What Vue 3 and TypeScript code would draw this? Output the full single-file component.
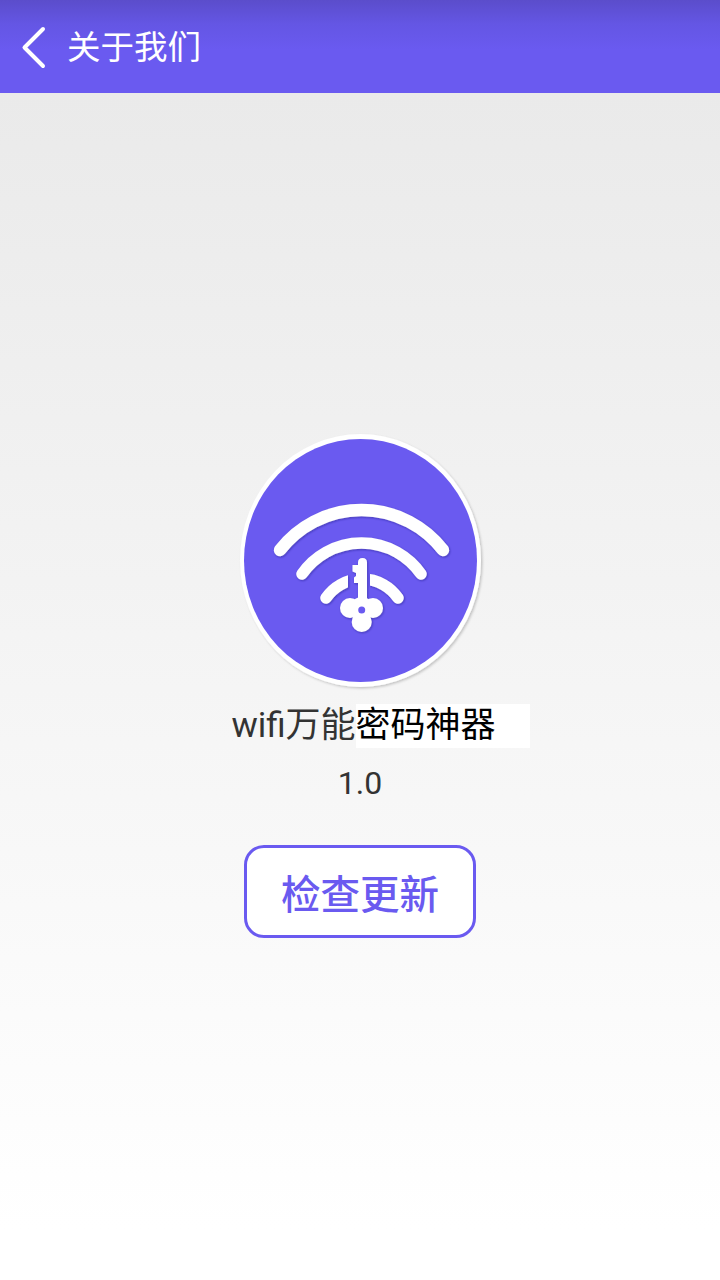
<template>
  <div class="page">
    <header class="topbar">
      <svg class="back" width="30" height="50" viewBox="0 0 30 50" aria-label="返回">
        <path d="M24 7 L5.500 25.500 L24 44" />
      </svg>
      <h1 class="topbar__title">关于我们</h1>
    </header>

    <main class="about">
      <svg class="logo" width="250" height="260" viewBox="0 0 250 260">
        <defs>
          <filter id="ringShadow" x="-10%" y="-10%" width="120%" height="120%">
            <feDropShadow dx="1.500" dy="1.500" stdDeviation="1.200" flood-color="#000" flood-opacity="0.2" />
          </filter>
          <filter id="markShadow" x="-10%" y="-10%" width="120%" height="120%">
            <feDropShadow dx="0.800" dy="1" stdDeviation="0.800" flood-color="#1d1670" flood-opacity="0.45" />
          </filter>
          <clipPath id="innerArcGap">
            <rect x="80" y="130" width="32" height="50" />
            <rect x="134" y="130" width="40" height="50" />
          </clipPath>
        </defs>
        <ellipse cx="124.500" cy="127.500" rx="120.500" ry="126.500" fill="#fff" filter="url(#ringShadow)" />
        <ellipse cx="124.500" cy="127.500" rx="116.500" ry="121.500" fill="#6a5af0" />
        <g filter="url(#markShadow)">
          <g class="arcs">
            <path d="M44 117 A103 103 0 0 1 207 117" stroke-width="12.500" />
            <path d="M66 141 A72.600 72.600 0 0 1 185 141" stroke-width="11.500" />
            <path
              d="M90 165 A43.600 43.600 0 0 1 162 165"
              stroke-width="11.500"
              clip-path="url(#innerArcGap)"
            />
          </g>
          <path
            class="key"
            d="M122 132 V129.500 Q122 125 126.500 125 Q131 125 131 129.500 V172 H122 V150 H118 V144.500 L120 143 V140 L116.500 138.500 V132 Z"
          />
          <circle class="key" cx="114" cy="175" r="10" />
          <circle class="key" cx="137" cy="175" r="10" />
          <circle class="key" cx="125.700" cy="189" r="10" />
          <circle class="key" cx="125.700" cy="176" r="12" />
        </g>
        <circle cx="125.700" cy="177" r="3.500" fill="#6a5af0" />
      </svg>

      <div class="name">wifi万能<span class="name__patch">密码神器</span></div>
      <div class="version">1.0</div>
      <button class="update" type="button">检查更新</button>
    </main>
  </div>
</template>

<script setup lang="ts">
</script>

<style>
html,
body {
  margin: 0;
  background: #fff;
}
</style>

<style scoped>
.page {
  width: 720px;
  height: 1280px;
  overflow: hidden;
  display: flex;
  flex-direction: column;
  font-family: Roboto, "Noto Sans CJK SC", sans-serif;
  background: linear-gradient(to bottom, #eaeaea 93px, #ffffff 1230px);
}

.topbar {
  height: 93px;
  flex: none;
  display: flex;
  align-items: center;
  box-sizing: border-box;
  padding-left: 19px;
  background: linear-gradient(to bottom, #5b4dcb 0, #6456e4 24px, #6a5af0 50px);
}

.back {
  flex: none;
}

.back path {
  fill: none;
  stroke: #fff;
  stroke-width: 4;
  stroke-linecap: round;
  stroke-linejoin: round;
}

.topbar__title {
  margin: 2px 0 0 18px;
  font-size: 33.500px;
  line-height: 91px;
  font-weight: 400;
  color: #fff;
}

.about {
  display: flex;
  flex-direction: column;
  align-items: center;
  padding-top: 340px;
}

.logo {
  display: block;
  margin-left: 2px;
}

.arcs path {
  fill: none;
  stroke: #fff;
  stroke-linecap: round;
}

.key {
  fill: #fff;
}

.name {
  margin-top: 11px;
  height: 44px;
  line-height: 44px;
  font-size: 35px;
  font-weight: 400;
  color: #333;
  white-space: nowrap;
  padding-left: 7px;
}

.name__patch {
  display: inline-block;
  padding-right: 34px;
  margin-right: -34px;
  background: #fff;
  color: #000;
}

.version {
  margin-top: 13px;
  font-size: 32px;
  line-height: 44px;
  font-weight: 400;
  color: #333;
}

.update {
  margin-top: 40px;
  width: 232px;
  height: 93px;
  box-sizing: border-box;
  padding: 0;
  border: 3px solid #6a5af0;
  border-radius: 20px;
  background: #fff;
  font-family: inherit;
  font-size: 39.500px;
  font-weight: 500;
  color: #6a5af0;
}
</style>
